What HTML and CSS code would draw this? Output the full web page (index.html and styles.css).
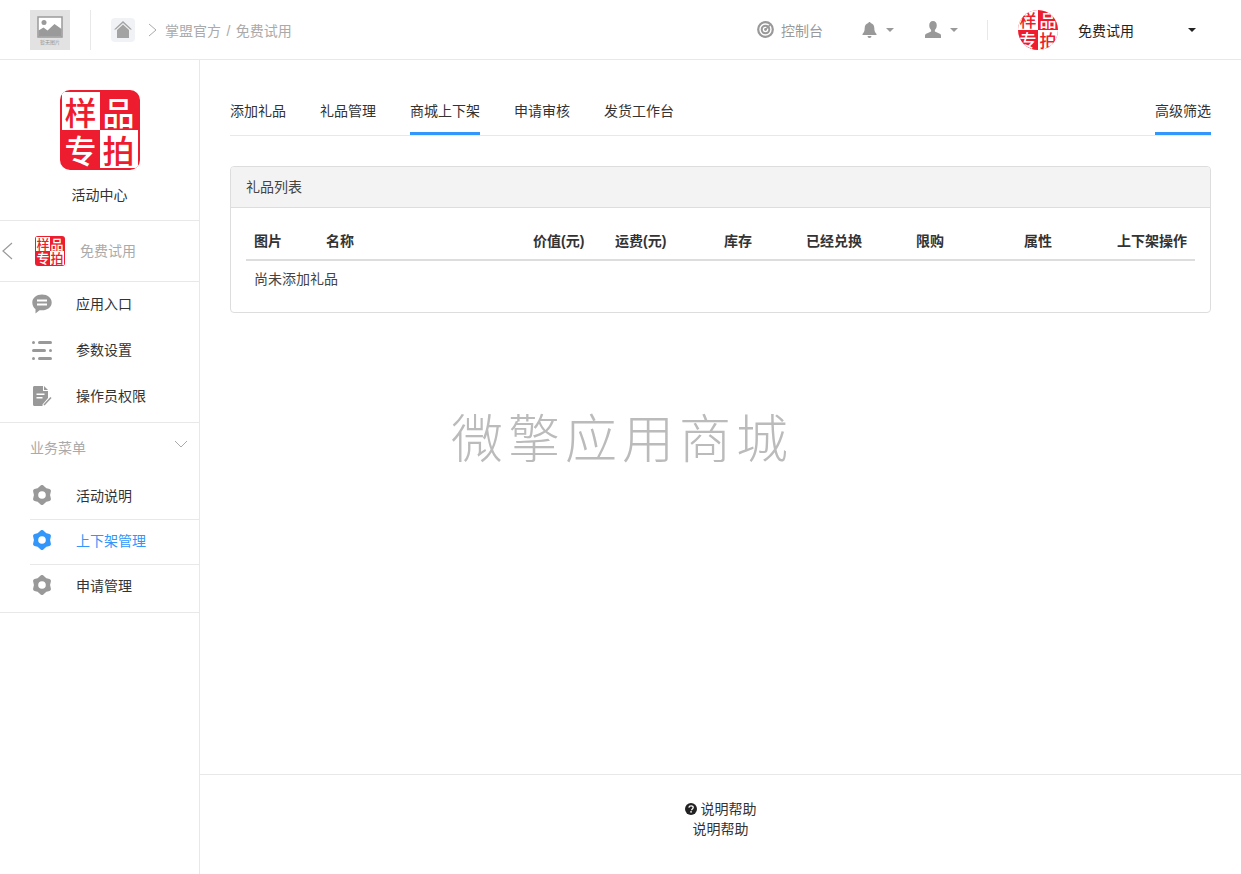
FILE: index.html
```html
<!DOCTYPE html>
<html>
	<head>
		<meta charset="UTF-8">
		<title>上下架管理</title>
		<link rel="stylesheet" href="styles.css">
	</head>
	<body>
		<svg class="defs" width="0" height="0">
			<symbol id="gear" viewBox="0 0 20 20">
				<polygon points="10,2 13,4.800 16.900,6 16,10 16.900,14 13,15.200 10,18 7,15.200 3.100,14 4,10 3.100,6 7,4.800" stroke-width="4" stroke-linejoin="round" style="stroke: currentColor; fill: currentColor"/>
				<circle cx="10" cy="10" r="3.800" fill="#fff"/>
			</symbol>
		</svg>

		<!--head-->
		<div class="topbar">
			<div class="placeholder">
				<svg width="26" height="22" viewBox="0 0 26 22">
					<rect x="1" y="1" width="24" height="20" fill="#fff" stroke="#9a9a9a" stroke-width="1.500"/>
					<circle cx="7" cy="6.500" r="2.500" fill="#9a9a9a"/>
					<path d="M1.500 20.500v-6l5-3 4 3 7-6.500 7 5v7.500z" fill="#9a9a9a"/>
				</svg>
				<span>暂无图片</span>
			</div>
			<div class="top-line"></div>
			<div class="home-box">
				<svg width="18" height="17" viewBox="0 0 18 17">
					<path d="M9 0 0 8.500h1.800L9 2l7.200 6.500H18z" fill="#a3a3a3"/>
					<path d="M9 3.600 3 9v8h12V9z" fill="#a3a3a3"/>
				</svg>
			</div>
			<svg class="crumb-arrow" width="9" height="14" viewBox="0 0 9 14"><path d="M1 1l7 6-7 6" fill="none" stroke="#aaa"/></svg>
			<div class="crumb">掌盟官方 / 免费试用</div>

			<div class="top-right">
				<svg class="ctrl-icon" width="17" height="17" viewBox="0 0 17 17">
					<circle cx="8.500" cy="8.500" r="7.300" fill="none" stroke="#999" stroke-width="2.200"/>
					<circle cx="8.500" cy="8.500" r="3.800" fill="none" stroke="#999" stroke-width="2"/>
					<path d="M8.500 8.500 13 4" stroke="#999" stroke-width="1.600"/>
					<circle cx="8.500" cy="8.500" r="1.400" fill="#999"/>
				</svg>
				<div class="ctrl-text">控制台</div>
				<svg class="bell-icon" width="15" height="16" viewBox="0 0 15 16">
					<path d="M7.500 0c.7 0 1.100.5 1.100 1.100 2.400.5 3.700 2.400 3.700 4.900 0 3 .7 4.500 2.200 6v1H.5v-1C2 10.500 2.700 9 2.700 6c0-2.500 1.300-4.400 3.700-4.900C6.400.5 6.800 0 7.500 0zM5.500 14h4a2 2 0 0 1-4 0z" fill="#999"/>
				</svg>
				<i class="caret"></i>
				<svg class="user-icon" width="16" height="17" viewBox="0 0 17 17" preserveAspectRatio="none">
					<path d="M8.500 0c2.500 0 4 1.800 4 4.300 0 2-.8 3.700-2 4.700v1.500l5.200 2.200c.9.400 1.300 1 1.300 1.800V17H0v-2.500c0-.8.400-1.400 1.300-1.800l5.200-2.200V9c-1.200-1-2-2.700-2-4.700C4.500 1.800 6 0 8.500 0z" fill="#999"/>
				</svg>
				<i class="caret"></i>
				<div class="top-line short"></div>
				<div class="seal round">
					<span class="white">样</span><span>品</span><span>专</span><span class="white">拍</span>
				</div>
				<div class="shop-name">免费试用</div>
				<i class="caret dark"></i>
			</div>
		</div>

		<div class="page">
			<!--sidebar-->
			<div class="sidebar">
				<div class="side-logo">
					<div class="seal big">
						<span class="white">样</span><span>品</span><span>专</span><span class="white">拍</span>
					</div>
					<div class="side-title">活动中心</div>
				</div>
				<div class="side-back">
					<svg class="back-arrow" width="12" height="18" viewBox="0 0 12 18"><path d="M11 1 2 9l9 8" fill="none" stroke="#9a9a9a" stroke-width="1.200"/></svg>
					<div class="seal small">
						<span class="white">样</span><span>品</span><span>专</span><span class="white">拍</span>
					</div>
					<div class="back-text">免费试用</div>
				</div>
				<div class="side-menu">
					<div class="side-item">
						<svg width="20" height="20" viewBox="0 0 20 20">
							<path fill-rule="evenodd" d="M10 .5c5.300 0 9.700 3.400 9.700 7.900s-4.400 7.900-9.700 7.900H7.500L3.500 19.500v-4.400C1.500 13.600.3 11.200.3 8.400.3 3.900 4.700.5 10 .5zM5 5.500v2h10v-2zm0 4v2h10v-2z" fill="#999"/>
						</svg>
						<span>应用入口</span>
					</div>
					<div class="side-item">
						<svg width="20" height="20" viewBox="0 0 20 20" fill="#999">
							<rect x="0" y="1" width="3" height="3" rx="1.500"/><rect x="6" y="1" width="14" height="3" rx="1.500"/>
							<rect x="0" y="9" width="14" height="3" rx="1.500"/><rect x="17" y="9" width="3" height="3" rx="1.500"/>
							<rect x="0" y="17" width="3" height="3" rx="1.500"/><rect x="6" y="17" width="14" height="3" rx="1.500"/>
						</svg>
						<span>参数设置</span>
					</div>
					<div class="side-item">
						<svg width="20" height="20" viewBox="0 0 20 20">
							<path fill-rule="evenodd" d="M1 1.500C1 .7 1.500 0 2.500 0H11v5h5v7l-5.500 6.500V20H2.500C1.500 20 1 19.300 1 18.500zM12 0l4 4h-4zM4.500 7.500V9h8V7.500zm0 3.500v1.500h6V11z" fill="#999"/>
							<path d="M12 19l7-7.500" stroke="#999" stroke-width="1.500"/>
						</svg>
						<span>操作员权限</span>
					</div>
				</div>
				<div class="side-group">
					<div class="group-title">
						<span>业务菜单</span>
						<svg width="14" height="8" viewBox="0 0 14 8"><path d="M1 1l6 6 6-6" fill="none" stroke="#aaa"/></svg>
					</div>
					<div class="group-item">
						<svg class="gear" width="20" height="20"><use href="#gear"/></svg>
						<span>活动说明</span>
					</div>
					<div class="group-item active">
						<svg class="gear" width="20" height="20"><use href="#gear"/></svg>
						<span>上下架管理</span>
					</div>
					<div class="group-item">
						<svg class="gear" width="20" height="20"><use href="#gear"/></svg>
						<span>申请管理</span>
					</div>
				</div>
			</div>

			<!--main-->
			<div class="main">
				<div class="content">
					<div class="tabs">
						<div class="tab">添加礼品</div>
						<div class="tab">礼品管理</div>
						<div class="tab active">商城上下架</div>
						<div class="tab">申请审核</div>
						<div class="tab">发货工作台</div>
						<div class="tab active filter">高级筛选</div>
					</div>
					<div class="panel">
						<div class="panel-head">礼品列表</div>
						<div class="panel-body">
							<table class="list">
								<thead>
									<tr>
										<th>图片</th>
										<th>名称</th>
										<th>价值(元)</th>
										<th>运费(元)</th>
										<th>库存</th>
										<th>已经兑换</th>
										<th>限购</th>
										<th>属性</th>
										<th>上下架操作</th>
									</tr>
								</thead>
								<tbody>
									<tr><td colspan="9">尚未添加礼品</td></tr>
								</tbody>
							</table>
						</div>
					</div>
				</div>
				<!--foot-->
				<div class="foot">
					<div class="foot-line">
						<svg width="12" height="12" viewBox="0 0 12 12">
							<circle cx="6" cy="6" r="6" fill="#222"/>
							<path d="M3.900 4.600C4 3.400 4.900 2.800 6.100 2.800c1.200 0 2.100.7 2.100 1.700 0 1.500-1.700 1.500-1.700 2.800" fill="none" stroke="#fff" stroke-width="1.300"/>
							<rect x="5.300" y="8.100" width="1.500" height="1.500" fill="#fff"/>
						</svg>
						说明帮助
					</div>
					<div>说明帮助</div>
				</div>
			</div>
		</div>

		<div class="watermark">微擎应用商城</div>
	</body>
</html>
```

FILE: styles.css
```css
body,div,span,table,th,td{
	margin: 0px;
	padding: 0px;
}
body{
	color: #333;
	font-size: 14px;
	font-family: "Liberation Sans", "Noto Sans CJK SC", sans-serif;
	background-color: #fff;
}
.defs{
	position: absolute;
}
/*seal logo*/
.seal{
	display: grid;
	grid-template-columns: 1fr 1fr;
	grid-template-rows: 1fr 1fr;
	background-color: #ed1c2e;
	box-sizing: border-box;
	overflow: hidden;
	flex-shrink: 0;
}
.seal span{
	color: #fff;
	font-family: "Noto Sans CJK SC", sans-serif;
	font-weight: 500;
	text-align: center;
}
.seal .white{
	color: #ed1c2e;
	background-color: #fff;
}
.seal.big{
	width: 80px;
	height: 80px;
	padding: 2px;
	font-size: 32px;
	line-height: 38px;
	border-radius: 10px;
}
.seal.small{
	width: 30px;
	height: 30px;
	padding: 1px;
	font-size: 13px;
	line-height: 14px;
	border-radius: 3px;
}
.seal.round{
	width: 40px;
	height: 40px;
	font-size: 17px;
	line-height: 20px;
	border-radius: 50%;
}
/*head start*/
.topbar{
	height: 59px;
	padding-left: 30px;
	display: flex;
	align-items: center;
	border-bottom: 1px solid #e8e8e8;
}
.placeholder{
	width: 40px;
	height: 40px;
	padding-top: 6px;
	background-color: #e2e2e2;
	box-sizing: border-box;
	display: flex;
	flex-direction: column;
	align-items: center;
}
.placeholder span{
	color: #999;
	font-size: 5px;
	line-height: 9px;
}
.top-line{
	margin-left: 20px;
	width: 1px;
	height: 40px;
	background-color: #e8e8e8;
}
.top-line.short{
	margin-left: 29px;
	height: 20px;
}
.home-box{
	margin-left: 20px;
	width: 24px;
	height: 24px;
	background-color: #f0f2f5;
	border-radius: 4px;
	display: flex;
	align-items: center;
	justify-content: center;
}
.crumb-arrow{
	margin-left: 13px;
}
.crumb{
	margin-left: 8px;
	color: #aaa;
	word-spacing: 1.500px;
}
.top-right{
	margin-left: auto;
	padding-right: 45px;
	display: flex;
	align-items: center;
}
.ctrl-text{
	margin-left: 7px;
	color: #999;
}
.bell-icon{
	margin-left: 39px;
}
.user-icon{
	margin-left: 31px;
}
.caret{
	margin-left: 9px;
	width: 0;
	height: 0;
	border: 4px solid transparent;
	border-top-color: #999;
	border-bottom-width: 0;
}
.caret.dark{
	margin-left: 54px;
	border-top-color: #222;
}
.top-right .seal{
	margin-left: 30px;
}
.shop-name{
	margin-left: 20px;
	color: #222;
}
/*head end*/

.page{
	display: flex;
	height: 815px;
}
/*sidebar start*/
.sidebar{
	width: 199px;
	border-right: 1px solid #e8e8e8;
	flex-shrink: 0;
}
.side-logo{
	height: 130px;
	padding-top: 30px;
	display: flex;
	flex-direction: column;
	align-items: center;
	border-bottom: 1px solid #e8e8e8;
}
.side-title{
	margin-top: 15px;
	color: #333;
	line-height: 20px;
}
.side-back{
	height: 60px;
	display: flex;
	align-items: center;
	border-bottom: 1px solid #e8e8e8;
}
.back-arrow{
	margin-left: 1px;
}
.side-back .seal{
	margin-left: 22px;
}
.back-text{
	margin-left: 15px;
	padding-bottom: 2px;
	color: #aaa;
}
.side-menu{
	height: 140px;
	border-bottom: 1px solid #e8e8e8;
}
.side-item{
	height: 46px;
	padding-left: 32px;
	display: flex;
	align-items: center;
	color: #333;
}
.side-item span{
	margin-bottom: 4px;
	margin-left: 24px;
}
.side-item svg{
	margin-bottom: 2px;
}
.group-title{
	height: 52px;
	padding: 0 11px 4px 30px;
	box-sizing: border-box;
	display: flex;
	align-items: center;
	justify-content: space-between;
	color: #aaa;
}
.group-title svg{
	margin-bottom: 6px;
}
.side-group{
	border-bottom: 1px solid #e8e8e8;
	padding-bottom: 2px;
}
.group-item{
	margin-left: 30px;
	padding: 0 0 4px 2px;
	height: 45px;
	box-sizing: border-box;
	display: flex;
	align-items: center;
	color: #333;
	border-bottom: 1px solid #e8e8e8;
}
.group-item span{
	margin-left: 24px;
}
.group-item:last-child{
	padding-bottom: 5px;
	border-bottom: 0;
}
.gear{
	color: #999;
}
.group-item.active{
	color: #3296fa;
}
.group-item.active .gear{
	color: #3296fa;
}
/*sidebar end*/

/*main start*/
.main{
	flex: 1;
	display: flex;
	flex-direction: column;
}
.content{
	height: 714px;
	padding: 30px 30px 0;
	box-sizing: border-box;
}
.tabs{
	height: 45px;
	display: flex;
	gap: 34px;
	border-bottom: 1px solid #e8e8e8;
}
.tab{
	height: 42px;
	line-height: 42px;
	color: #333;
}
.tab.active{
	border-bottom: 3px solid #3296fa;
}
.tab.filter{
	margin-left: auto;
}
.panel{
	margin-top: 30px;
	border: 1px solid #ddd;
	border-radius: 4px;
	overflow: hidden;
}
.panel-head{
	height: 40px;
	padding-left: 15px;
	line-height: 40px;
	color: #444;
	background-color: #f3f3f3;
	border-bottom: 1px solid #ddd;
}
.panel-body{
	padding: 15px;
}
.list{
	width: 100%;
	table-layout: fixed;
	border-collapse: collapse;
}
.list th{
	padding: 8px;
	height: 20px;
	line-height: 20px;
	text-align: left;
	color: #333;
	border-bottom: 2px solid #ddd;
}
.list th:nth-child(1){width: 56px;}
.list th:nth-child(2){width: 191px;}
.list th:nth-child(3){width: 66px;}
.list th:nth-child(4){width: 93px;}
.list th:nth-child(5){width: 66px;}
.list th:nth-child(6){width: 94px;}
.list th:nth-child(7){width: 92px;}
.list th:nth-child(8){width: 77px;}
.list td{
	padding: 8px;
	line-height: 20px;
	color: #444;
}
.foot{
	flex: 1;
	padding-top: 24px;
	line-height: 20px;
	text-align: center;
	color: #333;
	border-top: 1px solid #e8e8e8;
}
.foot-line svg{
	vertical-align: -1px;
}
/*main end*/

.watermark{
	position: absolute;
	left: 451px;
	top: 396px;
	color: #bbb;
	font-size: 52px;
	font-weight: 300;
	line-height: 80px;
	letter-spacing: 5px;
	white-space: nowrap;
	font-family: "Noto Sans CJK SC", sans-serif;
}
```
